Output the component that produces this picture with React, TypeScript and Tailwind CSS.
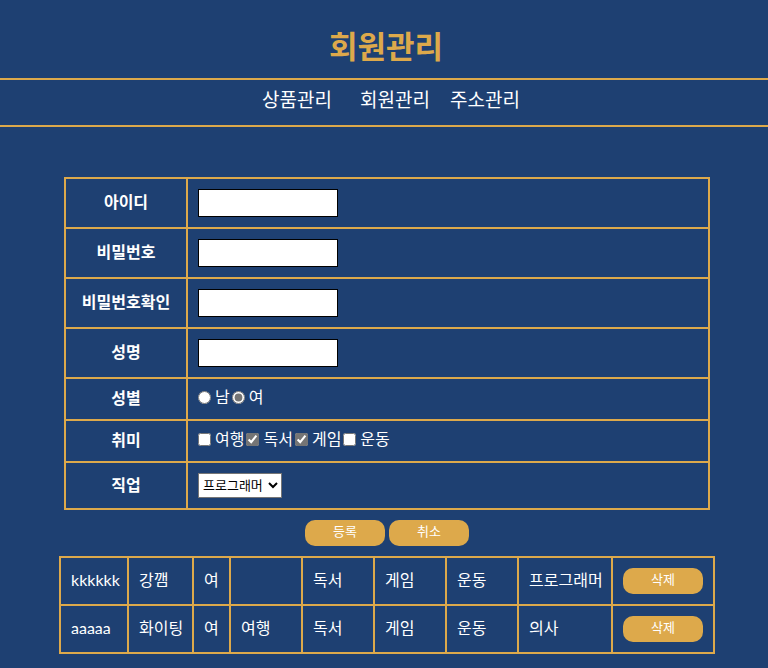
import { useState } from "react";

type Member = {
  id: string;
  name: string;
  gender: string;
  hobbies: string[];
  job: string;
};

const HOBBIES = ["여행", "독서", "게임", "운동"];

const TEXT_FIELDS = [
  { id: "userid", label: "아이디", type: "text" },
  { id: "password", label: "비밀번호", type: "password" },
  { id: "password-check", label: "비밀번호확인", type: "password" },
  { id: "username", label: "성명", type: "text" },
];

const INITIAL_MEMBERS: Member[] = [
  { id: "kkkkkk", name: "강깸", gender: "여", hobbies: ["", "독서", "게임", "운동"], job: "프로그래머" },
  { id: "aaaaa", name: "화이팅", gender: "여", hobbies: ["여행", "독서", "게임", "운동"], job: "의사" },
];

const line = "border-2 border-[#dda94b]";
const heading = `${line} pb-0.5`;
const pill =
  "block h-[26px] w-20 rounded-[10px] bg-[#dda94b] pb-1 text-center text-[13px] leading-5 text-white";

export default function App() {
  const [members, setMembers] = useState(INITIAL_MEMBERS);

  return (
    <div className="min-h-screen bg-[#1e4072] font-['Lato','Noto_Sans_CJK_KR',sans-serif] text-base leading-5 text-white">
      <header>
        <h1 className="pt-[26px] pb-3 pl-1 text-center text-[31px] leading-10 font-bold text-[#dda94b]">
          회원관리
        </h1>
        <nav className="flex justify-center border-y-2 border-[#dda94b] pt-2 pb-[13px] pl-3.5 text-[19px] leading-6">
          <a href="#product" className="mr-7">상품관리</a>
          <a href="#member" className="mr-5">회원관리</a>
          <a href="#address">주소관리</a>
        </nav>
      </header>

      <main className="flex flex-col items-center gap-2.5 pt-[50px] pb-3.5 pl-1.5">
        <form className="flex w-full max-w-[646px] flex-col gap-2.5" onSubmit={(e) => e.preventDefault()}>
          <table className="w-full table-fixed border-collapse">
            <colgroup>
              <col className="w-[122px]" />
              <col />
            </colgroup>
            <tbody>
              {TEXT_FIELDS.map((field) => (
                <tr key={field.id}>
                  <th scope="row" className={heading}>
                    <label htmlFor={field.id}>{field.label}</label>
                  </th>
                  <td className={`${line} p-2.5`}>
                    <input
                      id={field.id}
                      type={field.type}
                      className="block h-7 w-[140px] border border-black bg-white px-1 text-black"
                    />
                  </td>
                </tr>
              ))}
              <tr>
                <th scope="row" className={heading}>성별</th>
                <td className={`${line} pt-2 pr-2.5 pb-3 pl-2.5`}>
                  <div className="flex gap-0.5">
                    <label className="flex items-center gap-1">
                      <input type="radio" name="gender" className="size-[13px] accent-[#757575]" />남
                    </label>
                    <label className="flex items-center gap-1">
                      <input type="radio" name="gender" defaultChecked className="size-[13px] accent-[#757575]" />여
                    </label>
                  </div>
                </td>
              </tr>
              <tr>
                <th scope="row" className={heading}>취미</th>
                <td className={`${line} pt-2 pr-2.5 pb-3 pl-2.5`}>
                  <div className="flex gap-0.5">
                    {HOBBIES.map((hobby) => (
                      <label key={hobby} className="flex items-center gap-1">
                        <input
                          type="checkbox"
                          defaultChecked={hobby === "독서" || hobby === "게임"}
                          className="size-[13px] accent-[#757575]"
                        />
                        {hobby}
                      </label>
                    ))}
                  </div>
                </td>
              </tr>
              <tr>
                <th scope="row" className={heading}>
                  <label htmlFor="job">직업</label>
                </th>
                <td className={`${line} p-2.5`}>
                  <select
                    id="job"
                    className="block h-[25px] w-[84px] border border-[#767676] bg-white pb-0.5 text-[13px] text-black"
                  >
                    <option>프로그래머</option>
                    <option>의사</option>
                  </select>
                </td>
              </tr>
            </tbody>
          </table>
          <div className="flex justify-center gap-1">
            <button type="submit" className={pill}>등록</button>
            <button type="reset" className={pill}>취소</button>
          </div>
        </form>

        <table className="w-full max-w-[656px] table-fixed border-collapse">
          <colgroup>
            <col className="w-[68px]" />
            <col className="w-[65px]" />
            <col className="w-[37px]" />
            <col className="w-[72px]" />
            <col className="w-[72px]" />
            <col className="w-[72px]" />
            <col className="w-[72px]" />
            <col className="w-[94px]" />
            <col className="w-[102px]" />
          </colgroup>
          <tbody>
            {members.map((member) => (
              <tr key={member.id}>
                <td className={`${line} px-2.5 pb-0.5`}>{member.id}</td>
                <td className={`${line} px-2.5 pb-0.5 whitespace-nowrap`}>{member.name}</td>
                <td className={`${line} px-2.5 pb-0.5`}>{member.gender}</td>
                {member.hobbies.map((hobby, i) => (
                  <td key={i} className={`${line} px-2.5 pb-0.5`}>{hobby}</td>
                ))}
                <td className={`${line} px-2.5 pb-0.5 whitespace-nowrap`}>{member.job}</td>
                <td className={`${line} p-2.5`}>
                  <button
                    type="button"
                    className={pill}
                    onClick={() => setMembers(members.filter((m) => m.id !== member.id))}
                  >
                    삭제
                  </button>
                </td>
              </tr>
            ))}
          </tbody>
        </table>
      </main>
    </div>
  );
}
